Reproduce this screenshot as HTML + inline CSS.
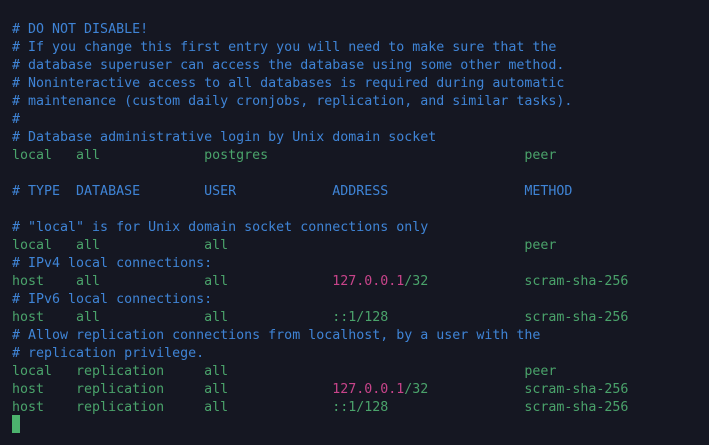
<!DOCTYPE html>
<html><head><meta charset="utf-8"><style>
html,body{margin:0;padding:0;background:#151722;width:709px;height:445px;overflow:hidden}
pre{margin:0;position:absolute;left:12px;top:21px;font-family:"DejaVu Sans Mono","Liberation Mono",monospace;font-size:13.3px;line-height:18px;color:#4aa36b;white-space:pre}
.c{color:#3f84d6}.p{color:#c8448a}
.cur{position:absolute;left:12px;top:415px;width:8px;height:18px;background:#4cb36e}
</style></head><body><pre><span class="c"># DO NOT DISABLE!
# If you change this first entry you will need to make sure that the
# database superuser can access the database using some other method.
# Noninteractive access to all databases is required during automatic
# maintenance (custom daily cronjobs, replication, and similar tasks).
#
# Database administrative login by Unix domain socket</span>
local   all             postgres                                peer

<span class="c"># TYPE  DATABASE        USER            ADDRESS                 METHOD</span>

<span class="c"># "local" is for Unix domain socket connections only</span>
local   all             all                                     peer
<span class="c"># IPv4 local connections:</span>
host    all             all             <span class="p">127.0.0.1</span>/32            scram-sha-256
<span class="c"># IPv6 local connections:</span>
host    all             all             ::1/128                 scram-sha-256
<span class="c"># Allow replication connections from localhost, by a user with the
# replication privilege.</span>
local   replication     all                                     peer
host    replication     all             <span class="p">127.0.0.1</span>/32            scram-sha-256
host    replication     all             ::1/128                 scram-sha-256</pre><div class="cur"></div></body></html>
